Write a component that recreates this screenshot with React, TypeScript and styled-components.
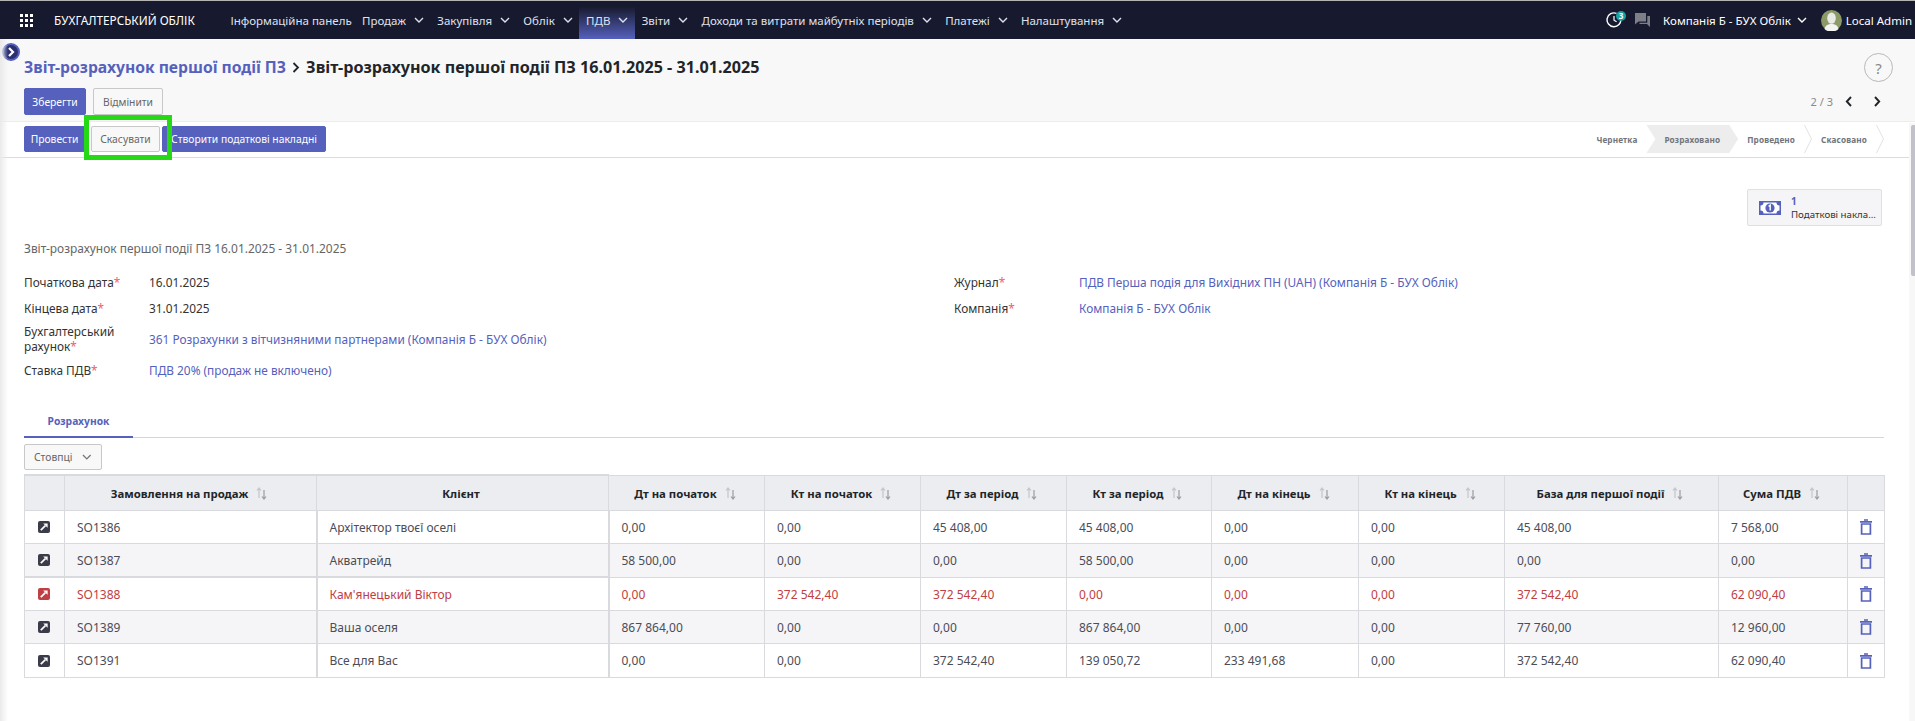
import { FC } from "react";
import styled, { createGlobalStyle } from "styled-components";

const ACCENT = "#5561bd";
const NAVY = "#171a2f";
const RED = "#bf4044";

const GlobalStyle = createGlobalStyle`
	html, body {
		margin: 0;
		height: 721px;
		overflow: hidden;
		background: #fff;
		font-family: "Noto Sans", sans-serif;
		font-size: 12px;
		color: #333;
	}
	* { box-sizing: border-box; }
`;

const menu = [
	{ title: "Інформаційна панель" },
	{ title: "Продаж", hasChevron: true },
	{ title: "Закупівля", hasChevron: true },
	{ title: "Облік", hasChevron: true },
	{ title: "ПДВ", hasChevron: true, isActive: true },
	{ title: "Звіти", hasChevron: true },
	{ title: "Доходи та витрати майбутніх періодів", hasChevron: true },
	{ title: "Платежі", hasChevron: true },
	{ title: "Налаштування", hasChevron: true },
];

const columns = [
	{ title: "", width: 40 },
	{ title: "Замовлення на продаж", width: 252, sortable: true },
	{ title: "Клієнт", width: 292 },
	{ title: "Дт на початок", width: 156, sortable: true },
	{ title: "Кт на початок", width: 156, sortable: true },
	{ title: "Дт за період", width: 146, sortable: true },
	{ title: "Кт за період", width: 145, sortable: true },
	{ title: "Дт на кінець", width: 147, sortable: true },
	{ title: "Кт на кінець", width: 146, sortable: true },
	{ title: "База для першої події", width: 214, sortable: true },
	{ title: "Сума ПДВ", width: 129, sortable: true },
	{ title: "", width: 37 },
];

const rows = [
	{ height: 33, cells: ["SO1386", "Архітектор твоєї оселі", "0,00", "0,00", "45 408,00", "45 408,00", "0,00", "0,00", "45 408,00", "7 568,00"] },
	{ height: 34, cells: ["SO1387", "Акватрейд", "58 500,00", "0,00", "0,00", "58 500,00", "0,00", "0,00", "0,00", "0,00"] },
	{ height: 33, isDanger: true, cells: ["SO1388", "Кам'янецький Віктор", "0,00", "372 542,40", "372 542,40", "0,00", "0,00", "0,00", "372 542,40", "62 090,40"] },
	{ height: 33, cells: ["SO1389", "Ваша оселя", "867 864,00", "0,00", "0,00", "867 864,00", "0,00", "0,00", "77 760,00", "12 960,00"] },
	{ height: 34, cells: ["SO1391", "Все для Вас", "0,00", "0,00", "372 542,40", "139 050,72", "233 491,68", "0,00", "372 542,40", "62 090,40"] },
];

const Chevron: FC<{ color?: string }> = ({ color = "currentColor" }) => (
	<svg width="10" height="6" viewBox="0 0 10 6" fill="none">
		<path d="M1 1l4 4 4-4" stroke={color} strokeWidth="1.4" />
	</svg>
);

const SortIcon = () => (
	<svg width="11" height="13" viewBox="0 0 11 13" fill="none">
		<path d="M3 11V2M1 3.5L3 1l2 2.5" stroke="#c4c5ca" strokeWidth="1.2" />
		<path d="M8 3v9M6 9.5L8 12l2-2.5" stroke="#9b9ca3" strokeWidth="1.2" />
	</svg>
);

const LinkIcon: FC<{ color: string }> = ({ color }) => (
	<svg width="12" height="12" viewBox="0 0 12 12">
		<rect width="12" height="12" rx="2" fill={color} />
		<path d="M2.8 9.2L7.4 4.6" stroke="#fff" strokeWidth="1.7" />
		<path d="M5.2 2.4h4.4v4.4z" fill="#fff" />
	</svg>
);

const TrashIcon = () => (
	<svg width="12" height="16" viewBox="0 0 12 16" fill="none">
		<path d="M4 1h4M0 2.8h12" stroke={ACCENT} strokeWidth="1.7" />
		<path d="M1.6 5h8.8v10H1.6z" stroke={ACCENT} strokeWidth="1.7" />
	</svg>
);

const MoneyIcon = () => (
	<SMoneySvg width="22" height="14" viewBox="0 0 22 14">
		<rect width="22" height="14" fill={ACCENT} />
		<path d="M1.5 4.5a3 3 0 0 0 3-3h13a3 3 0 0 0 3 3v5a3 3 0 0 0-3 3h-13a3 3 0 0 0-3-3z" fill="#fff" />
		<circle cx="11" cy="7" r="4.6" fill={ACCENT} />
		<path d="M9.6 5.4L11.2 4.2v5.4" stroke="#fff" strokeWidth="1.4" fill="none" />
	</SMoneySvg>
);

const ClockIcon = () => (
	<svg width="16" height="16" viewBox="0 0 16 16" fill="none">
		<path d="M10.5 1.4A6.9 6.9 0 1 0 14.8 7" stroke="#fff" strokeWidth="1.4" />
		<path d="M8 4v4.2l2.6 1.6" stroke="#fff" strokeWidth="1.2" />
	</svg>
);

const ChatIcon = () => (
	<svg width="15" height="14" viewBox="0 0 15 14">
		<path d="M0 0h11v8.5H3.5L0 11.5z" fill="#7d7e88" />
		<path d="M12.3 3H15v11l-3-3H4.5V9.8h7.8z" fill="#7d7e88" />
	</svg>
);

const Avatar = () => (
	<svg width="21" height="21" viewBox="0 0 21 21">
		<circle cx="10.5" cy="10.5" r="10.5" fill="#8c9a68" />
		<ellipse cx="10.5" cy="8.2" rx="4.3" ry="5.6" fill="#e9e9e6" />
		<path d="M3.5 19c1-4.2 4-5 7-5s6 .8 7 5a10.5 10.5 0 0 1-14 0z" fill="#f3f3f1" />
	</svg>
);

const AppsIcon = () => (
	<svg width="13" height="13" viewBox="0 0 13 13" fill="#fff">
		{[0, 5, 10].map((y) => [0, 5, 10].map((x) => (
			<rect key={x + "-" + y} x={x} y={y} width="3" height="3" />
		)))}
	</svg>
);

const StepArrow = () => (
	<svg width="8" height="28" viewBox="0 0 8 28" fill="none">
		<path d="M.5 0l7 14-7 14" stroke="#e1e1e1" />
	</svg>
);

const App = () => (
	<SPage>
		<GlobalStyle />
		<SNav>
			<AppsIcon />
			<SBrand>БУХГАЛТЕРСЬКИЙ ОБЛІК</SBrand>
			<SMenu>
				{menu.map((item) => (
					<SMenuItem key={item.title} $isActive={item.isActive} $hasChevron={item.hasChevron}>
						{item.title}
						{item.hasChevron && <Chevron />}
					</SMenuItem>
				))}
			</SMenu>
			<SNavRight>
				<SClock>
					<ClockIcon />
					<SBadge>3</SBadge>
				</SClock>
				<ChatIcon />
				<SCompany>
					Компанія Б - БУХ Облік
					<Chevron />
				</SCompany>
				<SUser>
					<Avatar />
					Local Admin
				</SUser>
			</SNavRight>
		</SNav>

		<SSidebarToggle>
			<svg width="8" height="10" viewBox="0 0 8 10" fill="none">
				<path d="M2 1l4 4-4 4" stroke="#fff" strokeWidth="2.2" />
			</svg>
		</SSidebarToggle>

		<SControlPanel>
			<SControlLeft>
				<SBreadcrumb>
					<SBreadcrumbLink>Звіт-розрахунок першої події ПЗ</SBreadcrumbLink>
					<svg width="8" height="11" viewBox="0 0 8 11" fill="none">
						<path d="M1.5 1l4.5 4.5L1.5 10" stroke="#212529" strokeWidth="1.8" />
					</svg>
					<SBreadcrumbCurrent>Звіт-розрахунок першої події ПЗ 16.01.2025 - 31.01.2025</SBreadcrumbCurrent>
				</SBreadcrumb>
				<SButtons>
					<SButton $isPrimary $width={62}>Зберегти</SButton>
					<SButton $width={70}>Відмінити</SButton>
				</SButtons>
			</SControlLeft>
			<SControlRight>
				<SHelp>?</SHelp>
				<SPager>
					<SPagerCount>2 / 3</SPagerCount>
					<svg width="8" height="11" viewBox="0 0 8 11" fill="none">
						<path d="M6 1L1.8 5.5 6 10" stroke="#212529" strokeWidth="1.9" />
					</svg>
					<svg width="8" height="11" viewBox="0 0 8 11" fill="none">
						<path d="M2 1l4.2 4.5L2 10" stroke="#212529" strokeWidth="1.9" />
					</svg>
				</SPager>
			</SControlRight>
		</SControlPanel>

		<SStatusBar>
			<SStatusButtons>
				<SButton $isPrimary $width={61}>Провести</SButton>
				<SHighlighted>
					<SButton $width={69}>Скасувати</SButton>
					<SHighlight />
				</SHighlighted>
				<SWideButton $width={164}>Створити податкові накладні</SWideButton>
			</SStatusButtons>
			<SSteps>
				<SStep>Чернетка</SStep>
				<SActiveStep>Розраховано</SActiveStep>
				<SStep>Проведено</SStep>
				<StepArrow />
				<SStep>Скасовано</SStep>
				<StepArrow />
			</SSteps>
		</SStatusBar>

		<SSheet>
			<SSmartRow>
				<SSmartButton>
					<MoneyIcon />
					<SSmartText>
						<SSmartCount>1</SSmartCount>
						<span>Податкові накла...</span>
					</SSmartText>
				</SSmartButton>
			</SSmartRow>

			<SSheetTitle>Звіт-розрахунок першої події ПЗ 16.01.2025 - 31.01.2025</SSheetTitle>

			<SForm>
				<div>
					<SField>
						<SLabel>Початкова дата<SRequired>*</SRequired></SLabel>
						<SValue>16.01.2025</SValue>
					</SField>
					<SField>
						<SLabel>Кінцева дата<SRequired>*</SRequired></SLabel>
						<SValue>31.01.2025</SValue>
					</SField>
					<SField $isTall>
						<SLabel>Бухгалтерський рахунок<SRequired>*</SRequired></SLabel>
						<SValue $isLink>361 Розрахунки з вітчизняними партнерами (Компанія Б - БУХ Облік)</SValue>
					</SField>
					<SField>
						<SLabel>Ставка ПДВ<SRequired>*</SRequired></SLabel>
						<SValue $isLink>ПДВ 20% (продаж не включено)</SValue>
					</SField>
				</div>
				<div>
					<SField>
						<SLabel>Журнал<SRequired>*</SRequired></SLabel>
						<SValue $isLink>ПДВ Перша подія для Вихідних ПН (UAH) (Компанія Б - БУХ Облік)</SValue>
					</SField>
					<SField>
						<SLabel>Компанія<SRequired>*</SRequired></SLabel>
						<SValue $isLink>Компанія Б - БУХ Облік</SValue>
					</SField>
				</div>
			</SForm>

			<STabs>
				<STab>Розрахунок</STab>
			</STabs>

			<SColumnsButton>
				Стовпці
				<Chevron color="#777" />
			</SColumnsButton>

			<STable>
				<thead>
					<tr>
						{columns.map((column, idx) => (
							<SHeaderColumn key={idx} $width={column.width} $isThick={idx < 3}>
								<SHeaderInner>
									{column.title}
									{column.sortable && <SortIcon />}
								</SHeaderInner>
							</SHeaderColumn>
						))}
					</tr>
				</thead>
				<tbody>
					{rows.map((row) => (
						<SRow key={row.cells[0]} $height={row.height} $isDanger={row.isDanger}>
							<SColumn $isThickTop={row.isDanger}>
								<SLinkCell><LinkIcon color={row.isDanger ? RED : "#3b3c49"} /></SLinkCell>
							</SColumn>
							{row.cells.map((cell, idx) => (
								<SColumn
									key={idx}
									$isThickSide={idx === 1}
									$isThickTop={row.isDanger && idx < 2}
								>
									{cell}
								</SColumn>
							))}
							<SColumn>
								<SIconCell><TrashIcon /></SIconCell>
							</SColumn>
						</SRow>
					))}
				</tbody>
			</STable>
		</SSheet>

		<SLeftShade />
		<SScrollTrack>
			<SScrollThumb />
		</SScrollTrack>
	</SPage>
);

export default App;

const SPage = styled.div`
	position: relative;
	width: 1915px;
	height: 721px;
	overflow: hidden;
`;

const SNav = styled.nav`
	display: flex;
	align-items: center;
	height: 39px;
	padding-left: 20px;
	background: ${NAVY};
	border-top: 1px solid #b5b5b5;
	color: #fff;
`;

const SBrand = styled.div`
	margin-left: 21px;
	font-size: 11.8px;
	white-space: nowrap;
`;

const SMenu = styled.div`
	display: flex;
	align-items: stretch;
	align-self: stretch;
	margin-left: 29px;
`;

const SMenuItem = styled.div<{ $isActive?: boolean; $hasChevron?: boolean }>`
	display: flex;
	align-items: center;
	gap: 8px;
	padding: 0 6.65px;
	margin-right: ${({ $hasChevron }) => ($hasChevron ? "0" : "-3px")};
	font-size: 11.5px;
	white-space: nowrap;
	color: #dfe1ee;
	background: ${({ $isActive }) => ($isActive ? `linear-gradient(${NAVY} 15%, ${ACCENT})` : "transparent")};
`;

const SNavRight = styled.div`
	display: flex;
	align-items: center;
	margin-left: auto;
	padding-right: 3px;
	gap: 13px;
`;

const SClock = styled.div`
	position: relative;
	display: flex;
`;

const SBadge = styled.span`
	position: absolute;
	top: -1px;
	right: -4px;
	width: 10px;
	height: 10px;
	border-radius: 50%;
	background: #17a2a2;
	color: #fff;
	font-size: 8px;
	font-weight: 700;
	line-height: 10px;
	text-align: center;
`;

const SCompany = styled.div`
	display: flex;
	align-items: center;
	gap: 6px;
	font-size: 11.5px;
	white-space: nowrap;
`;

const SUser = styled.div`
	display: flex;
	align-items: center;
	gap: 4px;
	margin-left: 1px;
	font-size: 11.5px;
	white-space: nowrap;
`;

const SSidebarToggle = styled.div`
	position: absolute;
	top: 43px;
	left: 2px;
	display: flex;
	align-items: center;
	justify-content: center;
	width: 18px;
	height: 18px;
	border-radius: 50%;
	background: #2b3170;
	border: 2px solid ${ACCENT};
`;

const SControlPanel = styled.div`
	display: flex;
	justify-content: space-between;
	height: 83px;
	padding: 14px 22px 0 24px;
	background: #f8f8f8;
	border-bottom: 1px solid #ececec;
`;

const SControlLeft = styled.div`
	display: flex;
	flex-direction: column;
`;

const SBreadcrumb = styled.div`
	display: flex;
	align-items: center;
	gap: 6px;
	height: 28px;
	font-size: 15.7px;
	font-weight: 700;
	color: #212529;
	white-space: nowrap;
`;

const SBreadcrumbLink = styled.span`
	color: ${ACCENT};
`;

const SBreadcrumbCurrent = styled.span`
	font-size: 16.15px;
`;

const SButtons = styled.div`
	display: flex;
	gap: 7px;
	margin-top: 7px;
`;

const SButton = styled.button<{ $isPrimary?: boolean; $width: number }>`
	width: ${({ $width }) => $width}px;
	height: 27px;
	padding: 0;
	border-radius: 2px;
	border: 1px solid ${({ $isPrimary }) => ($isPrimary ? ACCENT : "#c8c8c8")};
	background: ${({ $isPrimary }) => ($isPrimary ? ACCENT : "#f8f8f8")};
	color: ${({ $isPrimary }) => ($isPrimary ? "#fff" : "#666")};
	font-family: inherit;
	font-size: 10.3px;
	white-space: nowrap;
`;

const SWideButton = styled(SButton).attrs({ $isPrimary: true })`
	margin-left: -4px;
`;

const SControlRight = styled.div`
	display: flex;
	flex-direction: column;
	align-items: flex-end;
`;

const SHelp = styled.div`
	display: flex;
	align-items: center;
	justify-content: center;
	width: 29px;
	height: 29px;
	border-radius: 50%;
	border: 1px solid #b9b9b9;
	color: #888;
	font-size: 15px;
`;

const SPager = styled.div`
	display: flex;
	align-items: center;
	gap: 20px;
	height: 16px;
	margin-top: 11px;
	margin-right: 12px;
	color: #8a8a8a;
	font-size: 11px;
`;

const SPagerCount = styled.span`
	margin-right: -8px;
`;

const SStatusBar = styled.div`
	display: flex;
	align-items: center;
	justify-content: space-between;
	height: 36px;
	padding: 0 31px 1px 24px;
	background: #fff;
	border-bottom: 1px solid #dcdcdc;
`;

const SStatusButtons = styled.div`
	display: flex;
	gap: 6px;

	& ${SButton} {
		height: 26px;
	}
`;

const SHighlighted = styled.div`
	position: relative;
	display: flex;
`;

const SHighlight = styled.div`
	position: absolute;
	top: -11px;
	left: -7px;
	right: -12px;
	bottom: -8px;
	border: 5px solid #25d914;
	pointer-events: none;
`;

const SSteps = styled.div`
	display: flex;
	align-items: center;
	height: 28px;
`;

const SStep = styled.div`
	padding: 0 9px;
	font-size: 8.2px;
	font-weight: 700;
	letter-spacing: 0.15px;
	color: #71757c;
	white-space: nowrap;
`;

const SActiveStep = styled(SStep)`
	display: flex;
	align-items: center;
	height: 100%;
	padding: 0 18px;
	background: #ededed;
	clip-path: polygon(0 0, calc(100% - 9px) 0, 100% 50%, calc(100% - 9px) 100%, 0 100%, 9px 50%);
`;

const SSheet = styled.div`
	padding: 0 31px 0 24px;
`;

const SSmartRow = styled.div`
	display: flex;
	justify-content: flex-end;
	padding: 31px 2px 0 0;
`;

const SSmartButton = styled.div`
	display: flex;
	align-items: center;
	gap: 10px;
	width: 135px;
	height: 37px;
	padding-left: 11px;
	background: #f5f5f7;
	border: 1px solid #dfe0e4;
	border-radius: 2px;
`;

const SMoneySvg = styled.svg`
	flex-shrink: 0;
`;

const SSmartText = styled.div`
	display: flex;
	flex-direction: column;
	font-size: 9.7px;
	line-height: 13px;
	color: #333;
	white-space: nowrap;
`;

const SSmartCount = styled.span`
	font-weight: 700;
	font-size: 10px;
	color: ${ACCENT};
`;

const SSheetTitle = styled.div`
	margin-top: 15px;
	font-size: 11.95px;
	line-height: 16px;
	color: #666;
`;

const SForm = styled.div`
	display: grid;
	grid-template-columns: 930px 1fr;
	margin-top: 12px;
`;

const SField = styled.div<{ $isTall?: boolean }>`
	display: grid;
	grid-template-columns: 125px 1fr;
	align-items: center;
	min-height: ${({ $isTall }) => ($isTall ? "36px" : "26px")};
`;

const SLabel = styled.div`
	width: 105px;
	font-size: 11.85px;
	line-height: 15px;
	color: #333;
`;

const SRequired = styled.span`
	color: #f0606a;
`;

const SValue = styled.div<{ $isLink?: boolean }>`
	font-size: 11.85px;
	color: ${({ $isLink }) => ($isLink ? ACCENT : "#333")};
`;

const STabs = styled.div`
	display: flex;
	height: 36px;
	margin-top: 19px;
	border-bottom: 1px solid #d5d6dc;
`;

const STab = styled.div`
	display: flex;
	align-items: center;
	justify-content: center;
	width: 109px;
	height: 36px;
	padding-top: 4px;
	margin-bottom: -1px;
	font-size: 10.3px;
	font-weight: 700;
	color: ${ACCENT};
	border-bottom: 2px solid ${ACCENT};
`;

const SColumnsButton = styled.button`
	display: flex;
	align-items: center;
	gap: 10px;
	width: 78px;
	height: 26px;
	margin-top: 6px;
	padding: 0 9px;
	background: #f8f8f8;
	border: 1px solid #c8c8c8;
	border-radius: 2px;
	color: #666;
	font-family: inherit;
	font-size: 10.3px;
`;

const STable = styled.table`
	width: 1860px;
	margin-top: 4px;
	table-layout: fixed;
	border-collapse: collapse;
`;

const SHeaderColumn = styled.th<{ $width: number; $isThick?: boolean }>`
	width: ${({ $width }) => $width}px;
	height: 35px;
	padding: 1px 0 0;
	background: #ecedf0;
	border: 1px solid #d8dadd;
	border-top-width: ${({ $isThick }) => ($isThick ? "2px" : "1px")};
	font-size: 11.35px;
	font-weight: 700;
	color: #212529;
`;

const SHeaderInner = styled.div`
	display: flex;
	align-items: center;
	justify-content: center;
	gap: 8px;
	padding-right: 3px;
`;

const SRow = styled.tr<{ $height: number; $isDanger?: boolean }>`
	height: ${({ $height }) => $height}px;
	color: ${({ $isDanger }) => ($isDanger ? RED : "#4c4d57")};

	&:nth-child(even) {
		background: #f5f5f7;
	}
`;

const SColumn = styled.td<{ $isThickSide?: boolean; $isThickTop?: boolean }>`
	padding: 1px 12px 0;
	border: 1px solid #d8dadd;
	border-left-width: ${({ $isThickSide }) => ($isThickSide ? "2px" : "1px")};
	border-right-width: ${({ $isThickSide }) => ($isThickSide ? "2px" : "1px")};
	border-top-width: ${({ $isThickTop }) => ($isThickTop ? "2px" : "1px")};
	font-size: 12px;
	white-space: nowrap;
`;

const SIconCell = styled.div`
	display: flex;
	justify-content: center;
	margin: 0 -12px;
`;

const SLinkCell = styled(SIconCell)`
	padding-right: 2px;
`;

const SLeftShade = styled.div`
	position: absolute;
	top: 39px;
	left: 0;
	bottom: 0;
	width: 8px;
	background: linear-gradient(to right, #eaeaea, rgba(255, 255, 255, 0));
	pointer-events: none;
`;

const SScrollTrack = styled.div`
	position: absolute;
	top: 123px;
	right: 0;
	bottom: 0;
	width: 6px;
	background: #f7f7f7;
`;

const SScrollThumb = styled.div`
	position: absolute;
	top: 2px;
	right: 0;
	width: 4px;
	height: 151px;
	background: #c0c1c9;
	border-radius: 2px 0 0 2px;
`;
